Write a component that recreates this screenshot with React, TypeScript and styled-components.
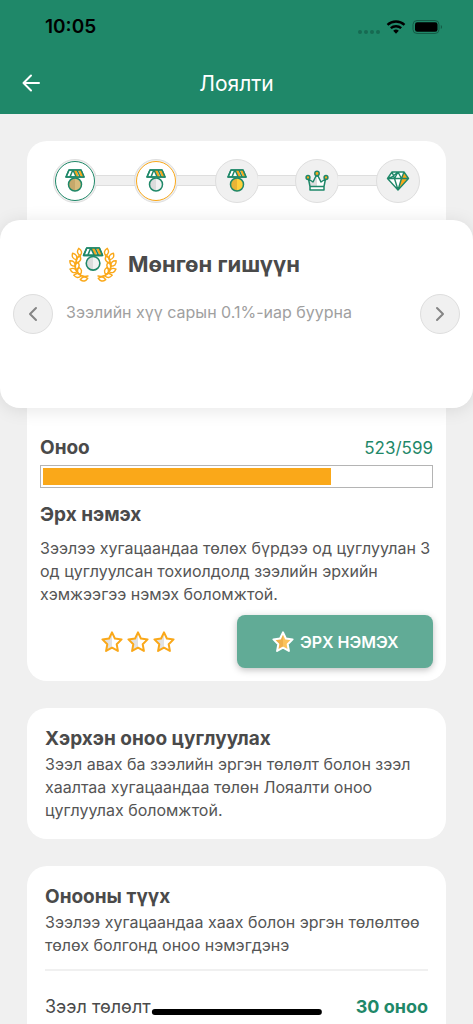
import React from "react";
import styled, { createGlobalStyle, css } from "styled-components";

const GREEN = "#1f8869";
const ORANGE = "#faa819";
const TEXT = "#4a4a4a";
const BORDER = "#dedede";
const GREY = "#f0f0f0";

const GlobalStyle = createGlobalStyle`
  * { box-sizing: border-box; }
  body {
    margin: 0;
    background: ${GREY};
    color: ${TEXT};
    font-family: Inter, "Noto Sans", sans-serif;
  }
  h1, h2, p, ol, ul { margin: 0; padding: 0; list-style: none; }
  button { font: inherit; padding: 0; cursor: pointer; }
`;

const Screen = styled.div`
  height: 100vh;
  display: flex;
  flex-direction: column;
`;

const Header = styled.header`
  flex: none;
  background: ${GREEN};
`;

const StatusBar = styled.div`
  display: flex;
  align-items: center;
  justify-content: space-between;
  height: 54px;
  padding: 0 30px 0 45px;
  color: #000;
`;

const Clock = styled.time`
  font-size: 19px;
  line-height: 24px;
  font-weight: 600;
`;

const NavBar = styled.div`
  display: grid;
  grid-template-columns: 40px 1fr 40px;
  align-items: center;
  height: 60px;
  padding: 0 12px;
  color: #fff;
`;

const BackButton = styled.button`
  display: grid;
  place-items: center;
  height: 40px;
  border: 0;
  background: none;
  color: inherit;
`;

const Title = styled.h1`
  font-size: 21px;
  line-height: 24px;
  font-weight: 400;
  text-align: center;
`;

const Content = styled.main`
  flex: 1;
  min-height: 0;
  overflow-y: auto;
  scrollbar-width: none;
  padding: 27px 0;
  display: flex;
  flex-direction: column;
  gap: 27px;
`;

const Card = styled.section<{ $inset?: boolean }>`
  flex: none;
  margin: 0 27px;
  border-radius: 20px;
  background: #fff;
  ${(p) => p.$inset && css`padding: 19px 18px 17px;`}
`;

const Steps = styled.ol`
  display: flex;
  align-items: center;
  height: 79px;
  padding: 0 26px;
`;

const Step = styled.li<{ $ring?: string }>`
  flex: none;
  display: grid;
  place-items: center;
  width: 44px;
  height: 44px;
  border: 1px solid ${BORDER};
  border-radius: 50%;
  background: ${GREY};
  ${(p) =>
    p.$ring &&
    css`
      &::before {
        content: "";
        grid-area: 1 / 1;
        width: 38px;
        height: 38px;
        border: 1px solid ${p.$ring};
        border-radius: 50%;
        background: #fff;
      }
    `}
  svg { grid-area: 1 / 1; z-index: 1; }
`;

const Connector = styled.li`
  flex: 1;
  height: 11px;
  margin: 0 -1px;
  border: solid ${BORDER};
  border-width: 1px 0;
  background: ${GREY};
`;

const Spotlight = styled.article`
  position: relative;
  display: grid;
  grid-template-columns: 40px 1fr 40px;
  gap: 13px;
  height: 188px;
  margin: 0 -27px;
  padding: 21px 13px;
  border-radius: 20px;
  background: #fff;
  box-shadow: 0 2px 18px rgba(0, 0, 0, 0.1);
`;

const RoundButton = styled.button`
  display: grid;
  place-items: center;
  width: 40px;
  height: 40px;
  margin-top: 53px;
  border: 1px solid ${BORDER};
  border-radius: 50%;
  background: ${GREY};
  color: #858585;
`;

const TierHead = styled.div`
  display: flex;
  align-items: center;
  gap: 11px;
  height: 46px;
  padding-left: 3px;
`;

const TierName = styled.h2`
  font-size: 22px;
  line-height: 24px;
  font-weight: 700;
`;

const TierText = styled.p`
  margin-top: 13px;
  font-size: 16px;
  line-height: 24px;
  color: #a0a0a0;
`;

const Points = styled.div`
  padding: 28px 13px 13px;
`;

const Row = styled.div`
  display: flex;
  align-items: center;
  justify-content: space-between;
`;

const Heading = styled.h2`
  font-size: 19px;
  line-height: 24px;
  font-weight: 700;
`;

const Score = styled.span`
  font-size: 17px;
  line-height: 24px;
  color: ${GREEN};
`;

const Bar = styled.div`
  height: 23px;
  margin: 5px 0 15px;
  padding: 2px;
  border: 1px solid #b4b4b4;
`;

const Fill = styled.div`
  height: 100%;
  background: ${ORANGE};
`;

const Body = styled.p<{ $top?: boolean }>`
  margin-top: ${(p) => (p.$top ? 10 : 2)}px;
  font-size: 16px;
  line-height: 23px;
  color: #555;
  white-space: nowrap;
`;

const Actions = styled.div`
  display: grid;
  grid-template-columns: 1fr 1fr;
  align-items: center;
  margin-top: 9px;
`;

const Stars = styled.div`
  display: flex;
  justify-content: center;
  gap: 2px;
`;

const PrimaryButton = styled.button`
  display: flex;
  align-items: center;
  justify-content: center;
  gap: 5px;
  height: 53px;
  border: 0;
  border-radius: 8px;
  background: #61ab96;
  box-shadow: 0 2px 7px rgba(0, 0, 0, 0.25);
  color: #fff;
  font-size: 16px;
  font-weight: 600;
`;

const History = styled.ul`
  margin-top: 12px;
  border-top: 2px solid ${GREY};
`;

const Entry = styled.li`
  display: flex;
  align-items: center;
  justify-content: space-between;
  height: 72px;
  font-size: 18px;
  line-height: 24px;
`;

const Amount = styled.strong`
  color: ${GREEN};
`;

const HomeIndicator = styled.div`
  position: fixed;
  bottom: 9px;
  left: 50%;
  width: 36%;
  height: 6px;
  border-radius: 3px;
  background: #000;
  transform: translateX(-50%);
`;

const MedalShape = ({ left, right }: { left: string; right: string }) => (
  <g stroke={GREEN} strokeWidth="1.5" strokeLinejoin="round">
    <path d="M5 1h12l3 7H2z" fill="#fff" />
    <path d="M9.500 1h3l2.500 7h-3zM14 1h3l3 7h-3z" fill={ORANGE} stroke="none" />
    <path d="M5 1h12l3 7H2zM8.800 1 6 8M9 1l3.200 7M13 1l3.200 7" fill="none" />
    <path d="M11 8.800a6.700 6.700 0 0 0 0 13.400z" fill={left} stroke="none" />
    <path d="M11 8.800a6.700 6.700 0 0 1 0 13.400z" fill={right} stroke="none" />
    <circle cx="11" cy="15.500" r="6.500" fill="none" />
  </g>
);

const Medal = (p: { left: string; right: string }) => (
  <svg width="22" height="23" viewBox="0 0 22 23" aria-hidden="true">
    <MedalShape {...p} />
  </svg>
);

const Crown = () => (
  <svg width="24" height="22" viewBox="0 0 24 22" aria-hidden="true">
    <path d="M3.500 9 8 12l4-6v11H5z" fill="#dedede" />
    <path d="m12 6 4 6 4.500-3L19 17h-7z" fill="#fff" />
    <path d="M5 16.500h14V20H5z" fill="#fff" />
    <g stroke={GREEN} strokeWidth="1.500" strokeLinejoin="round" fill="none">
      <path d="M3.500 9 5 16.500h14L20.500 9 16 12l-3-6h-2l-3 6zM5 16.500V20h14v-3.500" />
      <g fill={ORANGE}>
        <circle cx="3" cy="7.500" r="1.900" />
        <circle cx="12" cy="3.500" r="2.200" />
        <circle cx="21" cy="7.500" r="1.900" />
      </g>
    </g>
  </svg>
);

const Diamond = () => (
  <svg width="24" height="22" viewBox="0 0 24 22" aria-hidden="true">
    <path d="M6 2h12l4.500 6.500L12 20 1.500 8.500z" fill="#fff" />
    <path d="m18 2 4.500 6.500L12 20l3.500-11.500z" fill={ORANGE} />
    <path
      d="M6 2h12l4.500 6.500L12 20 1.500 8.500zM1.500 8.500h21M8.500 8.500 12 20l3.500-11.500M1.500 8.500 6 7l6-5 3.500 6.500L18 2M6 2l2.500 6.500L12 2"
      fill="none"
      stroke={GREEN}
      strokeWidth="1.400"
      strokeLinejoin="round"
    />
  </svg>
);

const LEAVES = [
  [10.5, 6, -12],
  [5.5, 10.5, -30],
  [9.5, 13.5, 28],
  [3.5, 17.5, -45],
  [8, 20, 18],
  [4.5, 24.5, -68],
  [10.5, 25, -8],
  [8.5, 29.5, -85],
  [15, 33, -100],
];

const Branch = () => (
  <g fill="none" stroke={ORANGE} strokeWidth="1.400" strokeLinejoin="round" strokeLinecap="round">
    <path d="M9.500 10C5 17 5 26 12 29.500q3 1.500 7 .5" />
    {LEAVES.map(([x, y, turn]) => (
      <path key={y} d="M0-3.800q4 3.800 0 7.600q-4-3.800 0-7.600z" transform={`translate(${x} ${y}) rotate(${turn})`} />
    ))}
  </g>
);

const LaurelMedal = () => (
  <svg width="48" height="36" viewBox="0 0 48 36" aria-hidden="true">
    <Branch />
    <g transform="translate(48 0) scale(-1 1)">
      <Branch />
    </g>
    <g transform="translate(12.500 1) scale(1.050)">
      <MedalShape left="#dcdcdc" right="#f2f2f2" />
    </g>
  </svg>
);

const STAR = "m12 2.300 2.900 6.200 6.700.9-4.900 4.800 1.200 6.700L12 17.700l-5.900 3.200 1.200-6.700-4.900-4.800 6.700-.9z";

const Star = ({ left, right, line }: { left: string; right: string; line: string }) => (
  <svg width="24" height="24" viewBox="0 0 24 24" aria-hidden="true">
    <path d={STAR} fill={right} />
    <path d="M12 2.300v15.400l-5.900 3.200 1.200-6.700-4.900-4.800 6.700-.9z" fill={left} />
    <path d={STAR} fill="none" stroke={line} strokeWidth="2" strokeLinejoin="round" />
  </svg>
);

const StatusIcons = () => (
  <svg width="86" height="16" viewBox="0 0 86 16" aria-hidden="true">
    <g fill="#176a52">
      <circle cx="3" cy="13" r="2" />
      <circle cx="9" cy="13" r="2" />
      <circle cx="15" cy="13" r="2" />
      <circle cx="21" cy="13" r="2" />
    </g>
    <g fill="none" stroke="#000" strokeWidth="2.400">
      <path d="M30.500 5.800a12.500 12.500 0 0 1 17 0" />
      <path d="M33.800 9.200a7.800 7.800 0 0 1 10.400 0" />
    </g>
    <path d="M36.200 11.700a4.200 4.200 0 0 1 5.600 0L39 14.700z" />
    <rect x="56" y="1.500" width="26" height="13" rx="4" fill="none" stroke="#145b46" />
    <rect x="58" y="3.300" width="22.500" height="9.500" rx="2.300" />
    <path d="M83.800 6v4c1.700-.6 1.700-3.400 0-4z" fill="#145b46" />
  </svg>
);

const Chevron = ({ d }: { d: string }) => (
  <svg width="20" height="20" viewBox="0 0 20 20" fill="none" stroke="currentColor" strokeWidth="2" strokeLinecap="round" strokeLinejoin="round" aria-hidden="true">
    <path d={d} />
  </svg>
);

export default function App() {
  const score = 523;
  const goal = 599;
  return (
    <>
      <GlobalStyle />
      <Screen>
        <Header>
          <StatusBar>
            <Clock>10:05</Clock>
            <StatusIcons />
          </StatusBar>
          <NavBar>
            <BackButton aria-label="Буцах">
              <svg width="20" height="20" viewBox="0 0 20 20" fill="none" stroke="currentColor" strokeWidth="2" strokeLinecap="round" strokeLinejoin="round">
                <path d="M17 9H1.500M9 1.500 1.500 9 9 16.500" />
              </svg>
            </BackButton>
            <Title>Лоялти</Title>
          </NavBar>
        </Header>
        <Content>
          <Card>
            <Steps>
              <Step $ring={GREEN}><Medal left="#c6a86b" right="#d8bb7c" /></Step>
              <Connector />
              <Step $ring={ORANGE}><Medal left="#dcdcdc" right="#f2f2f2" /></Step>
              <Connector />
              <Step><Medal left="#e8b437" right="#ffd03b" /></Step>
              <Connector />
              <Step><Crown /></Step>
              <Connector />
              <Step><Diamond /></Step>
            </Steps>
            <Spotlight>
              <RoundButton aria-label="Өмнөх"><Chevron d="m13 4-6 6 6 6" /></RoundButton>
              <div>
                <TierHead>
                  <LaurelMedal />
                  <TierName>Мөнгөн гишүүн</TierName>
                </TierHead>
                <TierText>Зээлийн хүү сарын 0.1%-иар буурна</TierText>
              </div>
              <RoundButton aria-label="Дараах"><Chevron d="m7 4 6 6-6 6" /></RoundButton>
            </Spotlight>
            <Points>
              <Row>
                <Heading>Оноо</Heading>
                <Score>{score}/{goal}</Score>
              </Row>
              <Bar role="progressbar" aria-label="Оноо" aria-valuenow={score} aria-valuemax={goal}>
                <Fill style={{ width: "74.5%" }} />
              </Bar>
              <Heading>Эрх нэмэх</Heading>
              <Body $top>
                Зээлээ хугацаандаа төлөх бүрдээ од цуглуулан 3<br />
                од цуглуулсан тохиолдолд зээлийн эрхийн<br />
                хэмжээгээ нэмэх боломжтой.
              </Body>
              <Actions>
                <Stars>
                  {[0, 1, 2].map((i) => (
                    <Star key={i} left="#e2e2e2" right="#fff" line={ORANGE} />
                  ))}
                </Stars>
                <PrimaryButton>
                  <Star left="#efb04b" right="#fbc35c" line="#fff" />
                  ЭРХ НЭМЭХ
                </PrimaryButton>
              </Actions>
            </Points>
          </Card>
          <Card $inset>
            <Heading>Хэрхэн оноо цуглуулах</Heading>
            <Body>
              Зээл авах ба зээлийн эргэн төлөлт болон зээл<br />
              хаалтаа хугацаандаа төлөн Лояалти оноо<br />
              цуглуулах боломжтой.
            </Body>
          </Card>
          <Card $inset>
            <Heading>Онооны түүх</Heading>
            <Body>
              Зээлээ хугацаандаа хаах болон эргэн төлөлтөө<br />
              төлөх болгонд оноо нэмэгдэнэ
            </Body>
            <History>
              <Entry>
                Зээл төлөлт
                <Amount>30 оноо</Amount>
              </Entry>
            </History>
          </Card>
        </Content>
        <HomeIndicator />
      </Screen>
    </>
  );
}
